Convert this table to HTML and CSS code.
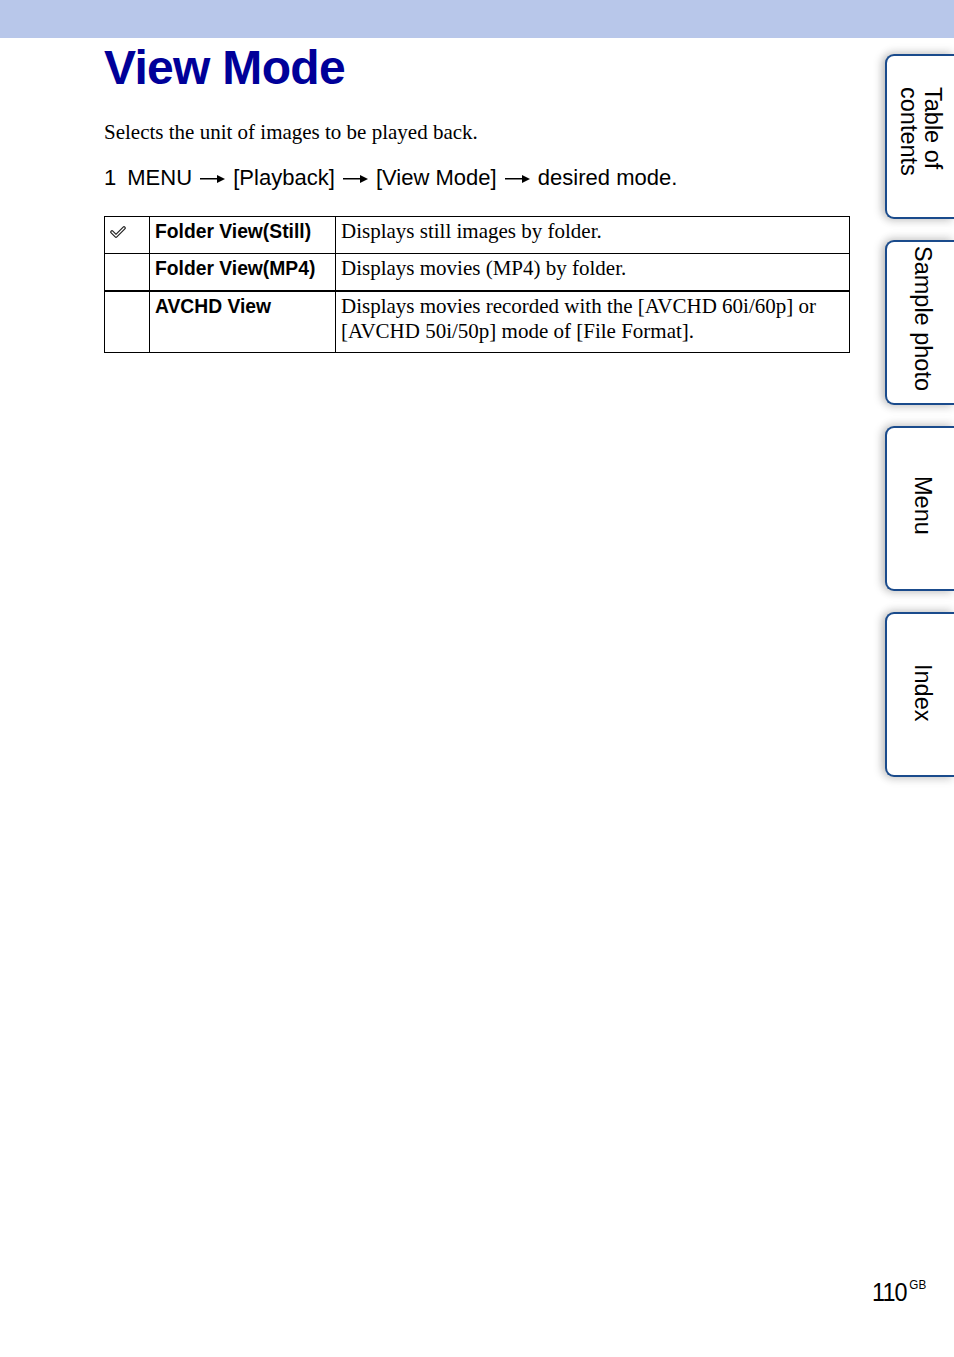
FILE: index.html
```html
<!DOCTYPE html>
<html>
<head>
<meta charset="utf-8">
<link rel="stylesheet" href="styles.css">
</head>
<body>
<div class="topbar"></div>
<div class="page">
  <main class="content">
    <h1 class="title">View Mode</h1>
    <p class="lead">Selects the unit of images to be played back.</p>
    <p class="step"><span class="num">1</span>MENU <span class="arr"></span> [Playback] <span class="arr"></span> [View Mode] <span class="arr"></span> desired mode.</p>
    <table class="modes">
      <tr class="short">
        <td class="icon"><svg width="16" height="14" viewBox="0 0 16 14"><path d="M2 7 L6 11 L14 3" fill="none" stroke="#222" stroke-width="3.6" stroke-linejoin="round" stroke-linecap="round"/><path d="M2 7 L6 11 L14 3" fill="none" stroke="#fff" stroke-width="1.2" stroke-linejoin="round" stroke-linecap="round"/></svg></td>
        <td class="name">Folder View(Still)</td>
        <td class="desc">Displays still images by folder.</td>
      </tr>
      <tr class="short thick">
        <td class="icon"></td>
        <td class="name">Folder View(MP4)</td>
        <td class="desc">Displays movies (MP4) by folder.</td>
      </tr>
      <tr class="tall">
        <td class="icon"></td>
        <td class="name">AVCHD View</td>
        <td class="desc">Displays movies recorded with the [AVCHD 60i/60p] or [AVCHD 50i/50p] mode of [File Format].</td>
      </tr>
    </table>
  </main>
  <nav class="tabs">
    <div class="tab"><span class="tab-label two">Table of<br>contents</span></div>
    <div class="tab"><span class="tab-label">Sample photo</span></div>
    <div class="tab"><span class="tab-label">Menu</span></div>
    <div class="tab"><span class="tab-label">Index</span></div>
  </nav>
</div>
<div class="pagenum">110<sup>GB</sup></div>
</body>
</html>
```
FILE: styles.css
```css
html, body {
  margin: 0;
  padding: 0;
  background: #fff;
}
body {
  width: 954px;
  height: 1357px;
  position: relative;
  overflow: hidden;
  font-family: "Liberation Sans", Arial, sans-serif;
  color: #000;
}
.topbar {
  height: 38px;
  background: #b8c7ea;
}
.page {
  display: flex;
  justify-content: space-between;
}
.content {
  width: 746px;
  margin-left: 104px;
}
.title {
  margin: 2px 0 0 0;
  font-family: "Liberation Sans", Arial, sans-serif;
  font-weight: bold;
  font-size: 48px;
  line-height: 56px;
  letter-spacing: -0.7px;
  color: #000099;
}
.lead {
  margin: 24px 0 0 0;
  font-family: "Liberation Serif", "Times New Roman", serif;
  font-size: 21px;
  line-height: 25px;
}
.step {
  margin: 20px 0 0 0;
  font-size: 22px;
  line-height: 26px;
  display: flex;
  align-items: baseline;
  white-space: pre;
}
.step .num {
  margin-right: 11px;
}
.arr {
  display: inline-block;
  width: 25px;
  height: 10px;
  margin: 0 2px;
  align-self: center;
  position: relative;
  top: 1px;
  background:
    linear-gradient(#000, #000) left center / 19px 1.5px no-repeat;
}
.arr::after {
  content: "";
  position: absolute;
  right: 0;
  top: 1px;
  border-left: 8px solid #000;
  border-top: 4px solid transparent;
  border-bottom: 4px solid transparent;
}
.modes {
  margin-top: 25px;
  width: 746px;
  border-collapse: collapse;
  table-layout: fixed;
}
.modes td {
  border: 1px solid #000;
  vertical-align: top;
  padding: 2px 5px 0 5px;
}
.modes tr.short { height: 37px; }
.modes tr.tall { height: 62px; }
.modes tr.thick td {
  border-bottom: 2px solid #000;
}
.modes td.icon {
  width: 34px;
  padding: 8px 5px 0 5px;
}
.modes td.name {
  width: 175px;
  font-weight: bold;
  font-size: 19.3px;
  line-height: 24px;
  padding-top: 3px;
}
.modes td.desc {
  font-family: "Liberation Serif", "Times New Roman", serif;
  font-size: 21px;
  line-height: 25px;
}
.tabs {
  display: flex;
  flex-direction: column;
  gap: 21px;
  margin-top: 16px;
  width: 69px;
}
.tab {
  height: 161px;
  border: 2px solid #1a4b8c;
  border-right: none;
  border-radius: 9px 0 0 9px;
  background: #fff;
  box-shadow: -4px 0 8px rgba(0,0,0,0.18), 0 -4px 8px rgba(0,0,0,0.08), 0 4px 8px rgba(0,0,0,0.08);
  display: flex;
  align-items: flex-start;
  justify-content: center;
}
.tab-label {
  writing-mode: vertical-rl;
  font-size: 23.5px;
  line-height: 24px;
  margin-top: 4px;
  margin-left: 4px;
}
.tab-label.two {
  margin-top: 31px;
  margin-left: 0;
}
.tab:nth-child(3) .tab-label { margin-top: 48px; }
.tab:nth-child(4) .tab-label { margin-top: 50px; }
.pagenum {
  position: absolute;
  left: 872px;
  top: 1277px;
  font-size: 26px;
  letter-spacing: -1px;
  transform: scaleX(0.9);
  transform-origin: left;
}
.pagenum sup {
  font-size: 13px;
  vertical-align: 12px;
  letter-spacing: 0;
  margin-left: 3px;
}
```
